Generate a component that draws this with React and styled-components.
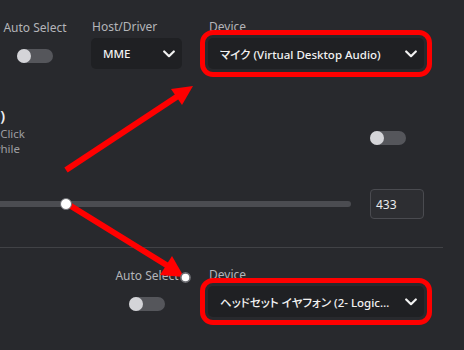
import React from "react";
import styled, { createGlobalStyle, css } from "styled-components";

const GlobalStyle = createGlobalStyle`
  html, body {
    margin: 0;
    padding: 0;
    background: #28292d;
  }
  body {
    font-family: "Noto Sans", "Noto Sans CJK JP", sans-serif;
  }
`;

const Chevron = () => (
  <svg width="12" height="8" viewBox="0 0 12 8">
    <polyline
      points="1.2,1.5 6,6.2 10.8,1.5"
      fill="none"
      stroke="#f2f2f2"
      strokeWidth="2.2"
      strokeLinecap="round"
      strokeLinejoin="round"
    />
  </svg>
);

const Switch = ({ on }) => (
  <Track on={on ? 1 : 0}>
    <Knob />
  </Track>
);

const Dropdown = ({ value, marked }) => (
  <SelectBox $marked={marked}>
    <SelectText>{value}</SelectText>
    <Chevron />
  </SelectBox>
);

// red arrows drawn on top of the screenshot
const Annotations = () => (
  <Overlay width="464" height="350" viewBox="0 0 464 350">
    <line x1="66" y1="170" x2="178" y2="96" stroke="#ff0000" strokeWidth="6" />
    <polygon points="193,86 171,89 182,105" fill="#ff0000" />
    <line x1="66" y1="203" x2="168" y2="266" stroke="#ff0000" strokeWidth="6" />
    <polygon points="184,277 160,275 172,256" fill="#ff0000" />
    <circle cx="185.5" cy="277.5" r="4.6" fill="#ffffff" stroke="#6d6e73" strokeWidth="1.6" />
  </Overlay>
);

export default function App() {
  const gain = 433;
  const maxGain = 1600;

  return (
    <Page>
      <GlobalStyle />
      <FieldRow>
        <AutoCol>
          <Label>Auto Select</Label>
          <Switch on={false} />
        </AutoCol>
        <Field $w={91}>
          <Label>Host/Driver</Label>
          <Dropdown value="MME" />
        </Field>
        <Field $w={216} $ml={5}>
          <Label>Device</Label>
          <Dropdown value="マイク (Virtual Desktop Audio)" marked />
        </Field>
      </FieldRow>

      <Setting>
        <Info>
          <Clip $end={5}>
            <Title>Noise Gate Threshold (dB)</Title>
          </Clip>
          <Clip $end={25}>
            <Desc>Reset to default with Double Click</Desc>
          </Clip>
          <Clip $end={20}>
            <Desc>Hold Shift for fine steps while</Desc>
          </Clip>
        </Info>
        <Controls>
          <SwitchSlot>
            <Switch on={false} />
          </SwitchSlot>
        </Controls>
      </Setting>

      <SliderRow>
        <SliderTrack>
          <Thumb style={{ left: `${(gain / maxGain) * 100}%` }} />
        </SliderTrack>
        <NumberBox>{gain}</NumberBox>
      </SliderRow>

      <Divider />

      <FieldRow>
        <AutoCol>
          <Label>Auto Select</Label>
          <Switch on={false} />
        </AutoCol>
        <Field $w={216} $ml={5}>
          <Label>Device</Label>
          <Dropdown value="ヘッドセット イヤフォン (2- Logicool G Headset)" marked />
        </Field>
      </FieldRow>

      <Annotations />
    </Page>
  );
}

const Page = styled.div`
  position: relative;
  width: 464px;
  height: 350px;
  overflow: hidden;
  background: #28292d;
  color: #b4b5b9;
`;

const FieldRow = styled.div`
  display: flex;
  justify-content: flex-end;
  align-items: flex-start;
  gap: 21px;
  padding: 19px 40px 0 0;
`;

const AutoCol = styled.div`
  width: 70px;
  display: flex;
  flex-direction: column;
  align-items: center;
  gap: 13px;
  padding-top: 1px;
`;

const Label = styled.div`
  font-size: 12px;
  line-height: 16px;
  color: #b4b5b9;
  white-space: nowrap;
`;

const Field = styled.div`
  display: flex;
  flex-direction: column;
  gap: 3px;
  width: ${(p) => p.$w}px;
  margin-left: ${(p) => p.$ml || 0}px;

  ${Label} {
    padding-left: 1px;
  }
`;

const SelectBox = styled.div`
  box-sizing: border-box;
  height: 31px;
  display: flex;
  align-items: center;
  padding: 0 7px 0 12px;
  background: #1f2023;
  border-radius: 5px;
  ${(p) =>
    p.$marked &&
    css`
      outline: 5px solid #ff0000;
      outline-offset: 3px;
    `}
`;

const SelectText = styled.span`
  flex: 1;
  min-width: 0;
  margin-right: 15px;
  font-size: 11.5px;
  font-weight: 500;
  color: #f2f2f2;
  white-space: nowrap;
  overflow: hidden;
  text-overflow: ellipsis;
  font-feature-settings: "palt";
`;

const Track = styled.div`
  width: 36px;
  height: 14px;
  border-radius: 7px;
  background: #55565b;
  display: flex;
  align-items: center;
  justify-content: ${(p) => (p.on ? "flex-end" : "flex-start")};
`;

const Knob = styled.div`
  width: 14px;
  height: 14px;
  border-radius: 50%;
  background: #d4d4d8;
`;

const Setting = styled.div`
  display: flex;
  align-items: flex-start;
  gap: 19px;
  padding: 36px 40px 0 0;
`;

const Info = styled.div`
  flex: 1;
  display: flex;
  flex-direction: column;
`;

const Clip = styled.div`
  width: ${(p) => p.$end}px;
  display: flex;
  justify-content: flex-end;
  white-space: nowrap;
`;

const Title = styled.div`
  font-size: 15px;
  line-height: 20px;
  font-weight: 600;
  color: #f0f0f2;
  margin-bottom: 1px;
`;

const Desc = styled.div`
  font-size: 11.5px;
  line-height: 15px;
  color: #9c9da1;
`;

const Controls = styled.div`
  width: 54px;
`;

const SwitchSlot = styled.div`
  margin-top: 26px;
`;

const SliderRow = styled.div`
  display: flex;
  align-items: center;
  gap: 19px;
  padding: 33px 40px 0 0;
`;

const SliderTrack = styled.div`
  position: relative;
  flex: 1;
  margin-left: -40px;
  height: 6px;
  border-radius: 3px;
  background: #4b4c51;
`;

const Thumb = styled.div`
  position: absolute;
  top: 50%;
  z-index: 2;
  box-sizing: border-box;
  width: 12px;
  height: 12px;
  border-radius: 50%;
  background: #ffffff;
  border: 1.6px solid #6d6e73;
  transform: translate(-50%, -50%);
`;

const NumberBox = styled.div`
  box-sizing: border-box;
  width: 54px;
  height: 30px;
  display: flex;
  align-items: center;
  padding-left: 5px;
  border: 1px solid #4a4b50;
  border-radius: 4px;
  background: #2d2e32;
  font-size: 12px;
  color: #ececee;
`;

const Divider = styled.div`
  height: 1px;
  margin: 28px 21px 0 0;
  background: #414246;
`;

const Overlay = styled.svg`
  position: absolute;
  left: 0;
  top: 0;
  z-index: 1;
  pointer-events: none;
`;
